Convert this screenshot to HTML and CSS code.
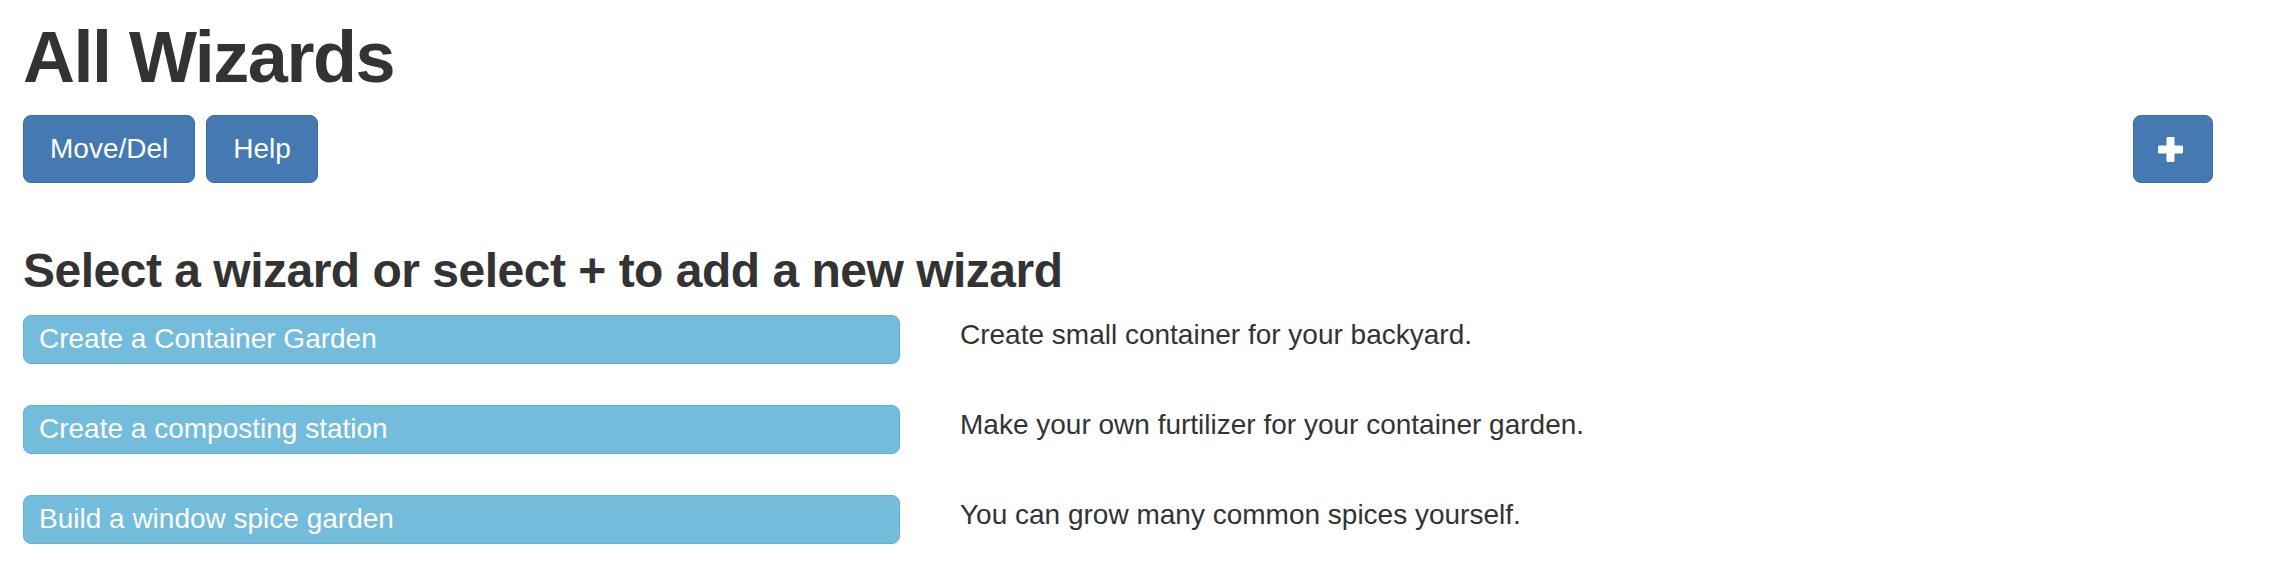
FILE: index.html
```html
<!DOCTYPE html>
<html lang="en">
<head>
<meta charset="utf-8">
<title>All Wizards</title>
<link rel="stylesheet" href="styles.css">
</head>
<body>
<div class="page">
  <h1 class="title">All Wizards</h1>
  <div class="toolbar">
    <div class="toolbar-left">
      <button class="btn btn-primary">Move/Del</button>
      <button class="btn btn-primary">Help</button>
    </div>
    <button class="btn btn-primary btn-add" aria-label="Add wizard">
      <svg class="icon-plus" width="25" height="25" viewBox="0 0 25 25"><rect x="8.5" y="0" width="8" height="25" rx="1.2" fill="#fff"/><rect x="0" y="8.5" width="25" height="8" rx="1.2" fill="#fff"/></svg>
    </button>
  </div>
  <h3 class="subtitle">Select a wizard or select + to add a new wizard</h3>
  <div class="wizard-list">
    <button class="btn btn-info wizard-btn">Create a Container Garden</button>
    <div class="wizard-desc">Create small container for your backyard.</div>
    <button class="btn btn-info wizard-btn">Create a composting station</button>
    <div class="wizard-desc">Make your own furtilizer for your container garden.</div>
    <button class="btn btn-info wizard-btn">Build a window spice garden</button>
    <div class="wizard-desc">You can grow many common spices yourself.</div>
  </div>
</div>
</body>
</html>
```

FILE: styles.css
```css
html, body {
  margin: 0;
  padding: 0;
  background: #ffffff;
}

body {
  font-family: "Liberation Sans", Arial, Helvetica, sans-serif;
  color: #333333;
  font-size: 28px;
  line-height: 40px;
}

.page {
  padding: 18px 73px 0 23px;
}

.title {
  margin: 0;
  font-size: 72px;
  line-height: 79px;
  font-weight: 700;
  letter-spacing: -1.5px;
  color: #333333;
}

.toolbar {
  margin-top: 18px;
  display: flex;
  justify-content: space-between;
  align-items: flex-start;
}

.toolbar-left {
  display: flex;
  gap: 11px;
}

.btn {
  font-family: "Liberation Sans", Arial, Helvetica, sans-serif;
  font-size: 28px;
  line-height: 40px;
  color: #ffffff;
  border: 1px solid transparent;
  border-radius: 8px;
  cursor: pointer;
  margin: 0;
  text-align: left;
}

.btn-primary {
  background: #4479b2;
  border-color: #3c6ca2;
  padding: 13px 26px 13px 26px;
  text-align: center;
}

.btn-add {
  display: flex;
  align-items: center;
  padding: 20px 29px 20px 24px;
  height: 68px;
  box-sizing: border-box;
  width: 80px;
}

.icon-plus {
  display: block;
}

.subtitle {
  margin: 61px 0 0 0;
  font-size: 48px;
  line-height: 53px;
  font-weight: 700;
  letter-spacing: -0.5px;
  color: #333333;
}

.wizard-list {
  margin-top: 18px;
  display: grid;
  grid-template-columns: 877px 1fr;
  column-gap: 60px;
  row-gap: 41px;
  align-items: start;
}

.btn-info {
  background: #73bcdb;
  border-color: #62b1d5;
}

.wizard-btn {
  padding: 3px 14px 4px 15px;
  height: 49px;
  box-sizing: border-box;
  width: 877px;
}

.wizard-desc {
  color: #333333;
  font-size: 28px;
  line-height: 40px;
}
```
